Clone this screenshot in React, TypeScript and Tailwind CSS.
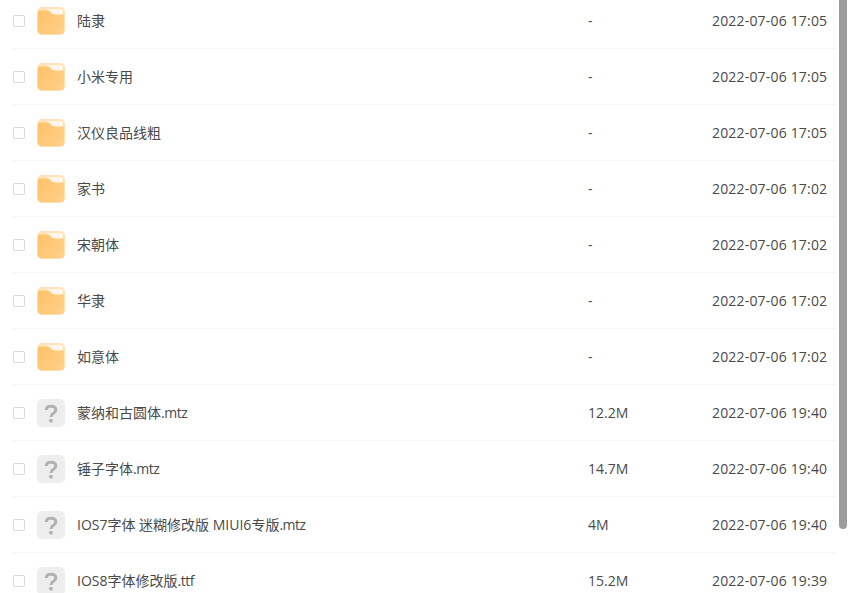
const rows = [
  { n: "陆隶", e: "", s: "-", d: "2022-07-06 17:05", f: true },
  { n: "小米专用", e: "", s: "-", d: "2022-07-06 17:05", f: true },
  { n: "汉仪良品线粗", e: "", s: "-", d: "2022-07-06 17:05", f: true },
  { n: "家书", e: "", s: "-", d: "2022-07-06 17:02", f: true },
  { n: "宋朝体", e: "", s: "-", d: "2022-07-06 17:02", f: true },
  { n: "华隶", e: "", s: "-", d: "2022-07-06 17:02", f: true },
  { n: "如意体", e: "", s: "-", d: "2022-07-06 17:02", f: true },
  { n: "蒙纳和古圆体", e: ".mtz", s: "12.2M", d: "2022-07-06 19:40", f: false },
  { n: "锤子字体", e: ".mtz", s: "14.7M", d: "2022-07-06 19:40", f: false },
  { n: "IOS7字体 迷糊修改版 MIUI6专版", e: ".mtz", s: "4M", d: "2022-07-06 19:40", f: false },
  { n: "IOS8字体修改版", e: ".ttf", s: "15.2M", d: "2022-07-06 19:39", f: false },
];

function FolderIcon() {
  return (
    <svg width="28" height="28" viewBox="0 0 28 28" className="shrink-0">
      <defs>
        <linearGradient id="fg" x1="0" y1="0" x2="1" y2="0.6">
          <stop offset="0" stopColor="#ffc069" />
          <stop offset="1" stopColor="#ffcf86" />
        </linearGradient>
      </defs>
      <rect width="28" height="28" rx="5" fill="#ffe3b8" />
      <rect x="10" y="2" width="16" height="8" rx="2" fill="#fff6e8" />
      <path d="M0.800 6C0.800 4 2 3.500 4 3.500H10C11.500 3.500 12.200 4 13 4.800L15.500 6.800C16.200 7.300 17 7.500 18 7.500H27.200V23C27.200 26 26 27.200 23 27.200H5C2 27.200 0.800 26 0.800 23Z" fill="url(#fg)" />
    </svg>
  );
}

function UnknownIcon() {
  return (
    <div className="w-7 h-7 shrink-0 rounded-[5px] bg-[#eeeeee] flex items-center justify-center">
      <svg width="16" height="22" viewBox="0 0 16 22">
        <path d="M3.300 8C3.300 5.500 5 4.300 8 4.300C11 4.300 12.800 5.700 12.800 8C12.800 9.800 11.700 10.500 10.300 11.400C8.900 12.300 8 13 8 15" fill="none" stroke="#b2b2b2" strokeWidth="3" />
        <rect x="6.200" y="17" width="3.600" height="3.600" rx="1" fill="#b2b2b2" />
      </svg>
    </div>
  );
}

export default function App() {
  return (
    <div className="relative h-[593px] w-[849px] overflow-hidden bg-white text-sm text-[#4a4a4a] font-['Open_Sans','Noto_Sans_CJK_SC',sans-serif]">
      <div className="-mt-[7px] px-[13px]">
        {rows.map((r) => (
          <div key={r.n} className="flex h-14 items-center border-b border-[#f5f5f5]">
            <span className="h-3 w-3 shrink-0 rounded-[2px] border border-[#d9d9d9] bg-white" />
            <span className="ml-3 flex">{r.f ? <FolderIcon /> : <UnknownIcon />}</span>
            <span className="ml-3 w-[511px] shrink-0 truncate">
              {r.n}
              <span className="tracking-[-0.5px]">{r.e}</span>
            </span>
            <span className="w-[124px] shrink-0">{r.s}</span>
            <span className="whitespace-nowrap tracking-[0.18px]">{r.d}</span>
          </div>
        ))}
      </div>
      <div className="absolute right-[2px] top-0 h-[529px] w-2 rounded-b-[4px] bg-[#9c9c9c]" />
    </div>
  );
}
